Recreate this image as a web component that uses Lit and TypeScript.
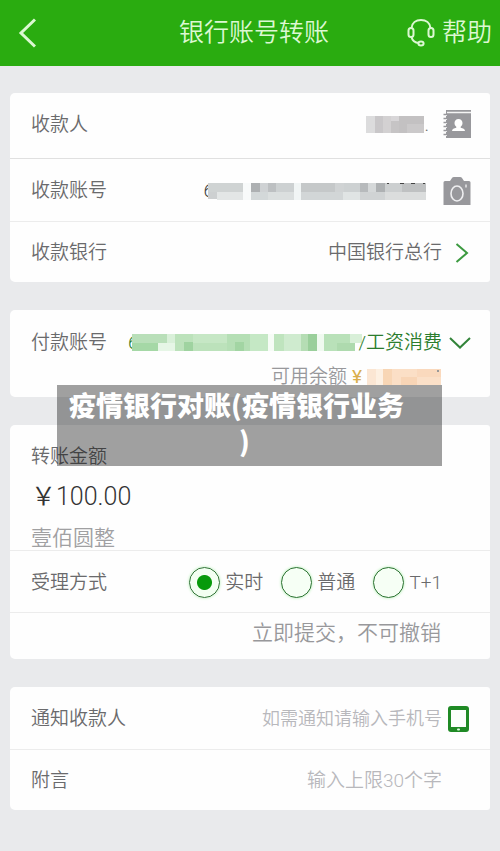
import { LitElement, html, svg, css } from "lit";
import { customElement, property, state } from "lit/decorators.js";

type Cell = [x: number, y: number, w: number, h: number, fill: string];

const payeeCells: Cell[] = [
  [0, 0, 9, 17, "#dcdcdd"], [9, 0, 8, 17, "#c9c7c9"], [17, 0, 8, 17, "#d3d1d2"],
  [25, 0, 8, 17, "#c6c4c5"], [33, 0, 25, 17, "#c3c1c2"], [25, 0, 8, 5, "#d8d6d8"],
  [41, 8, 17, 9, "#cbc9ca"],
];

const payeeAccountCells: Cell[] = [
  [0, 0, 35, 9, "#cfd3d3"], [0, 9, 9, 7, "#cdd0d1"], [9, 9, 26, 8, "#e3e6e6"],
  [35, 0, 8, 17, "#f8fafa"],
  [43, 0, 9, 9, "#adb0b2"], [52, 0, 8, 9, "#cfd2d4"], [60, 0, 8, 9, "#bdc0c2"],
  [68, 0, 18, 9, "#cdd1d2"], [43, 9, 17, 8, "#d3d8d9"], [60, 9, 26, 8, "#dbdfdf"],
  [86, 0, 7, 17, "#f1f5f5"],
  [93, 0, 34, 9, "#c5c8c9"], [127, 0, 9, 9, "#d0d3d4"], [136, 0, 16, 9, "#cdd1d2"],
  [152, 0, 8, 9, "#b7babc"], [160, 0, 8, 9, "#d5d8d9"], [168, 0, 9, 9, "#aeb1b3"],
  [177, 0, 17, 9, "#cccfd0"], [194, 0, 24, 9, "#bfc1c2"], [93, 9, 42, 8, "#d2d6d7"],
  [135, 9, 17, 8, "#e0e4e4"], [152, 9, 25, 8, "#d0d3d4"], [177, 9, 41, 8, "#dbdddd"],
  [179, 0, 2, 1, "#444"], [192, 0, 4, 1, "#444"], [203, 0, 4, 1, "#444"], [215, 0, 2, 1, "#444"],
];

const payerCells: Cell[] = [
  [0, 0, 35, 9, "#b9dfb9"], [0, 9, 26, 8, "#a5d8a6"], [26, 9, 17, 8, "#e6f6e6"],
  [35, 0, 17, 9, "#d9f0d9"], [43, 0, 66, 17, "#bce2bb"], [52, 8, 9, 9, "#9fd3a0"],
  [61, 0, 34, 9, "#c6e7c5"], [95, 0, 25, 17, "#b5dfb5"], [103, 8, 9, 9, "#a2d5a3"],
  [118, 0, 18, 17, "#c5e8c5"], [136, 0, 6, 17, "#f6fcf6"], [142, 0, 10, 17, "#bfe4be"],
  [152, 0, 17, 17, "#cfebcf"], [169, 0, 7, 17, "#b5ddb4"], [176, 0, 9, 17, "#9acf9b"],
  [185, 0, 7, 17, "#f0faf0"], [192, 0, 26, 17, "#b9e1b9"], [218, 0, 12, 9, "#d8efd8"],
  [205, 9, 18, 8, "#aedaae"],
];

const balanceCells: Cell[] = [
  [0, 0, 9, 16, "#fbe6d3"], [9, 0, 7, 16, "#fdf0e2"], [16, 0, 9, 16, "#f8d6b5"],
  [25, 0, 25, 16, "#fbdfc6"], [34, 8, 16, 8, "#f8d5b6"], [50, 0, 24, 16, "#fad9bd"],
  [50, 8, 24, 8, "#fbe0c8"], [70, 1, 2, 2, "#999"],
];

@customElement("masked-value")
export class MaskedValue extends LitElement {
  static styles = css`
    :host { display: block; flex: none; }
    svg { display: block; }
  `;

  @property({ attribute: false }) cells: Cell[] = [];

  render() {
    const width = Math.max(...this.cells.map(([x, , w]) => x + w));
    return html`<svg width=${width} height="17" viewBox="0 0 ${width} 17" shape-rendering="crispEdges" aria-hidden="true">
      ${this.cells.map(([x, y, w, h, fill]) => svg`<rect x=${x} y=${y} width=${w} height=${h} fill=${fill}></rect>`)}
    </svg>`;
  }
}

@customElement("app-root")
export class AppRoot extends LitElement {
  static styles = css`
    :host {
      display: block;
      min-height: 100vh;
      box-sizing: border-box;
      background: #e9eaec;
      color: #6a6a6c;
      font: 350 19px/24px Roboto, "Noto Sans CJK SC", sans-serif;
    }
    * { box-sizing: border-box; }
    svg { display: block; }
    button, input {
      font: inherit;
      color: inherit;
      margin: 0;
      padding: 0;
      border: 0;
      background: none;
    }
    button { cursor: pointer; }
    a { color: inherit; text-decoration: none; }

    .bar {
      display: grid;
      grid-template-columns: 1fr auto 1fr;
      align-items: center;
      height: 66px;
      padding: 0 8px 0 16px;
      background: #2aac10;
      color: #dcf8d2;
      font-size: 25px;
      line-height: 36px;
    }
    .bar h1 { margin: 0; font-size: inherit; font-weight: inherit; }
    .back { justify-self: start; }
    .help { justify-self: end; display: flex; align-items: center; gap: 7px; }

    form {
      position: relative;
      display: flex;
      flex-direction: column;
      gap: 28px;
      padding: 27px 10px 40px;
    }
    .card { background: #fefefe; border-radius: 5px 3px 3px 5px; }
    .row {
      display: grid;
      grid-template-columns: auto 1fr 29px;
      align-items: center;
      min-height: 63px;
      padding: 2px 19px 0 21px;
      border-bottom: 1px solid #ececec;
    }
    .row.first { min-height: 66px; padding: 0 19px 2px 21px; border-color: #e0e0e0; }
    .row:last-child { min-height: 60px; border-bottom: 0; }
    .value { display: flex; align-items: center; justify-content: flex-end; min-width: 0; }
    .masked { padding-right: 16px; }
    .dotted { padding-right: 13px; }
    .icon { justify-self: end; }
    .pick {
      grid-column: 2 / 4;
      display: grid;
      grid-template-columns: 1fr 29px;
      align-items: center;
      text-align: right;
    }
    .lead + masked-value { margin-left: -6px; }
    .lead { color: #444; }

    .payer { padding-bottom: 8px; }
    .payer .row { min-height: 63px; border: 0; }
    .payer .pick, .payer .lead { color: #2b7d2d; }
    .slash { margin-left: -4px; }
    .balance {
      display: flex;
      align-items: center;
      justify-content: flex-end;
      gap: 5px;
      margin: -8px 0 0;
      padding-right: 49px;
      color: #98989b;
    }
    .yen { color: #d9ae4c; font-weight: 400; }

    .amount { display: block; padding: 20px 21px 0; border-bottom: 1px solid #ececec; }
    .amount label { display: block; }
    .amount input { display: block; width: 100%; height: 32px; margin-top: 9px; font-size: 25px; color: #333; }
    .words { display: block; margin-top: 16px; font-size: 21px; line-height: 24px; color: #a0a0a2; }
    .method { min-height: 62px; margin: 0; }
    .choices { display: flex; justify-content: flex-end; gap: 18px; }
    .choice { display: flex; align-items: center; gap: 5px; }
    .choice input {
      appearance: none;
      width: 31px;
      height: 31px;
      border: 1px solid #2d7233;
      border-radius: 50%;
      background: #f6fff5;
      box-shadow: 0 0 3px #b4efb4;
    }
    .choice input:checked { background: radial-gradient(circle, #079a0b 7px, #f3fff2 8px); }
    .hint { margin: 0; padding: 8px 49px 14px 21px; text-align: right; font-size: 21px; line-height: 24px; color: #98989b; }

    .value input { width: 100%; text-align: right; }
    .value input::placeholder { color: #b8b8bc; opacity: 1; }
    .phone { font-size: 18px; }
    .caption {
      position: absolute;
      top: 319px;
      left: 57px;
      right: 58px;
      margin: 0;
      padding: 2px 10px 7px 0;
      background: rgba(0, 0, 0, 0.37);
      color: #fff;
      font-family: "Noto Sans CJK SC", sans-serif;
      font-size: 27px;
      font-weight: 900;
      line-height: 36px;
      text-align: center;
    }
    .caption span { display: block; }
    .caption .wide { padding-right: 16px; }
  `;

  @state() private method = "实时";

  private renderChoice(name: string) {
    return html`<label class="choice">
      <input type="radio" name="method" .value=${name} .checked=${this.method === name}
        @change=${() => { this.method = name; }}>${name}
    </label>`;
  }

  render() {
    return html`
      <header class="bar">
        <button class="back" aria-label="返回">
          <svg width="20" height="32" viewBox="0 0 20 32" fill="none" stroke="#dcf8d2" stroke-width="3"><path d="M19 2.500 5 16l14 13.500"/></svg>
        </button>
        <h1>银行账号转账</h1>
        <a class="help" href="#help">
          <svg width="28" height="30" viewBox="0 0 28 30" fill="none" stroke="#dcf8d2" stroke-width="2">
            <path d="M4.500 10C5 5 9 2 14 2s9 3 9.500 8"/>
            <rect x="1.500" y="10" width="5" height="9" rx="2.500"/>
            <rect x="21.500" y="10" width="5" height="9" rx="2.500"/>
            <path d="M4.500 19c.8 3.500 3.500 5.800 7.500 6"/>
            <ellipse cx="14" cy="25.500" rx="2.600" ry="2"/>
          </svg>
          帮助
        </a>
      </header>
      <form @submit=${(e: Event) => e.preventDefault()}>
        <section class="card">
          <div class="row first">
            <span>收款人</span>
            <span class="value dotted"><masked-value .cells=${payeeCells}></masked-value><span aria-hidden="true">.</span></span>
            <button class="icon" type="button" aria-label="通讯录">
              <svg width="28" height="29" viewBox="0 0 28 29">
                <path fill="#98989c" d="M3 0h25v28H3z"/>
                <path stroke="#f4f4f4" stroke-width="1.500" d="M4 2.500h24"/>
                <path stroke="#fff" stroke-width="2" stroke-dasharray="2 2" d="M3 4v24"/>
                <path stroke="#98989c" stroke-width="1.500" d="M.5 4.500h4M.5 8.500h4M.5 12.500h4M.5 16.500h4M.5 20.500h4M.5 24.500h4"/>
                <path fill="#fff" d="M15.500 9c2.500 0 4 1.700 4 4 0 1.600-.8 3-1.800 3.700v1c2.200.6 4.300 1.200 4.300 3.300H9c0-2.100 2.100-2.700 4.300-3.300v-1c-1-.7-1.800-2.100-1.800-3.700 0-2.300 1.500-4 4-4z"/>
              </svg>
            </button>
          </div>
          <div class="row">
            <span>收款账号</span>
            <span class="value masked"><span class="lead">6</span><masked-value .cells=${payeeAccountCells}></masked-value></span>
            <button class="icon" type="button" aria-label="拍照">
              <svg width="28" height="28" viewBox="0 0 28 28">
                <path fill="#98989c" d="M2 4h5l2-3q.5-1 2-1h6q1.500 0 2 1l2 3h5q1.500 0 1.500 1.500V28H.5V5.500Q.5 4 2 4z"/>
                <ellipse cx="14" cy="16.500" rx="6" ry="7.500" fill="none" stroke="#eeeef0" stroke-width="1.600"/>
                <path stroke="#eeeef0" stroke-width="1.400" d="M23 7.500v3"/>
              </svg>
            </button>
          </div>
          <div class="row">
            <span>收款银行</span>
            <button class="pick" type="button">
              中国银行总行
              <svg class="icon" width="20" height="22" viewBox="0 0 20 22" fill="none" stroke="#3c9a40" stroke-width="2"><path d="M5.500 2 16 11 5.500 20"/></svg>
            </button>
          </div>
        </section>

        <section class="card payer">
          <div class="row">
            <span>付款账号</span>
            <button class="pick" type="button">
              <span class="value"><span class="lead">6</span><masked-value .cells=${payerCells}></masked-value><span class="slash">/</span>工资消费</span>
              <svg class="icon" width="22" height="14" viewBox="0 0 22 14" fill="none" stroke="#33843a" stroke-width="2"><path d="M1 2l10 9.500L21 2"/></svg>
            </button>
          </div>
          <p class="balance"><span>可用余额</span><span class="yen">¥</span><masked-value .cells=${balanceCells}></masked-value></p>
        </section>

        <section class="card">
          <div class="amount">
            <label for="amount">转账金额</label>
            <input id="amount" type="text" value="￥100.00">
            <output class="words" for="amount">壹佰圆整</output>
          </div>
          <div class="row method" role="radiogroup" aria-label="受理方式">
            <span>受理方式</span>
            <div class="choices">${["实时", "普通", "T+1"].map((name) => this.renderChoice(name))}</div>
          </div>
          <p class="hint">立即提交，不可撤销</p>
        </section>

        <section class="card">
          <div class="row">
            <label for="phone">通知收款人</label>
            <span class="value phone"><input id="phone" type="tel" placeholder="如需通知请输入手机号"></span>
            <button class="icon" type="button" aria-label="选择手机号">
              <svg width="23" height="27" viewBox="0 0 23 27">
                <rect width="21" height="26" rx="3" fill="#1f8a25"/>
                <path fill="#fbfffb" d="M3 4h15v17H3z"/>
                <rect x="9" y="22.500" width="3" height="2" rx="1" fill="#e4fbe4"/>
              </svg>
            </button>
          </div>
          <div class="row">
            <label for="note">附言</label>
            <span class="value"><input id="note" type="text" maxlength="30" placeholder="输入上限30个字"></span>
          </div>
        </section>

        <p class="caption"><span class="wide">疫情银行对账(疫情银行业务</span><span>)</span></p>
      </form>
    `;
  }
}
